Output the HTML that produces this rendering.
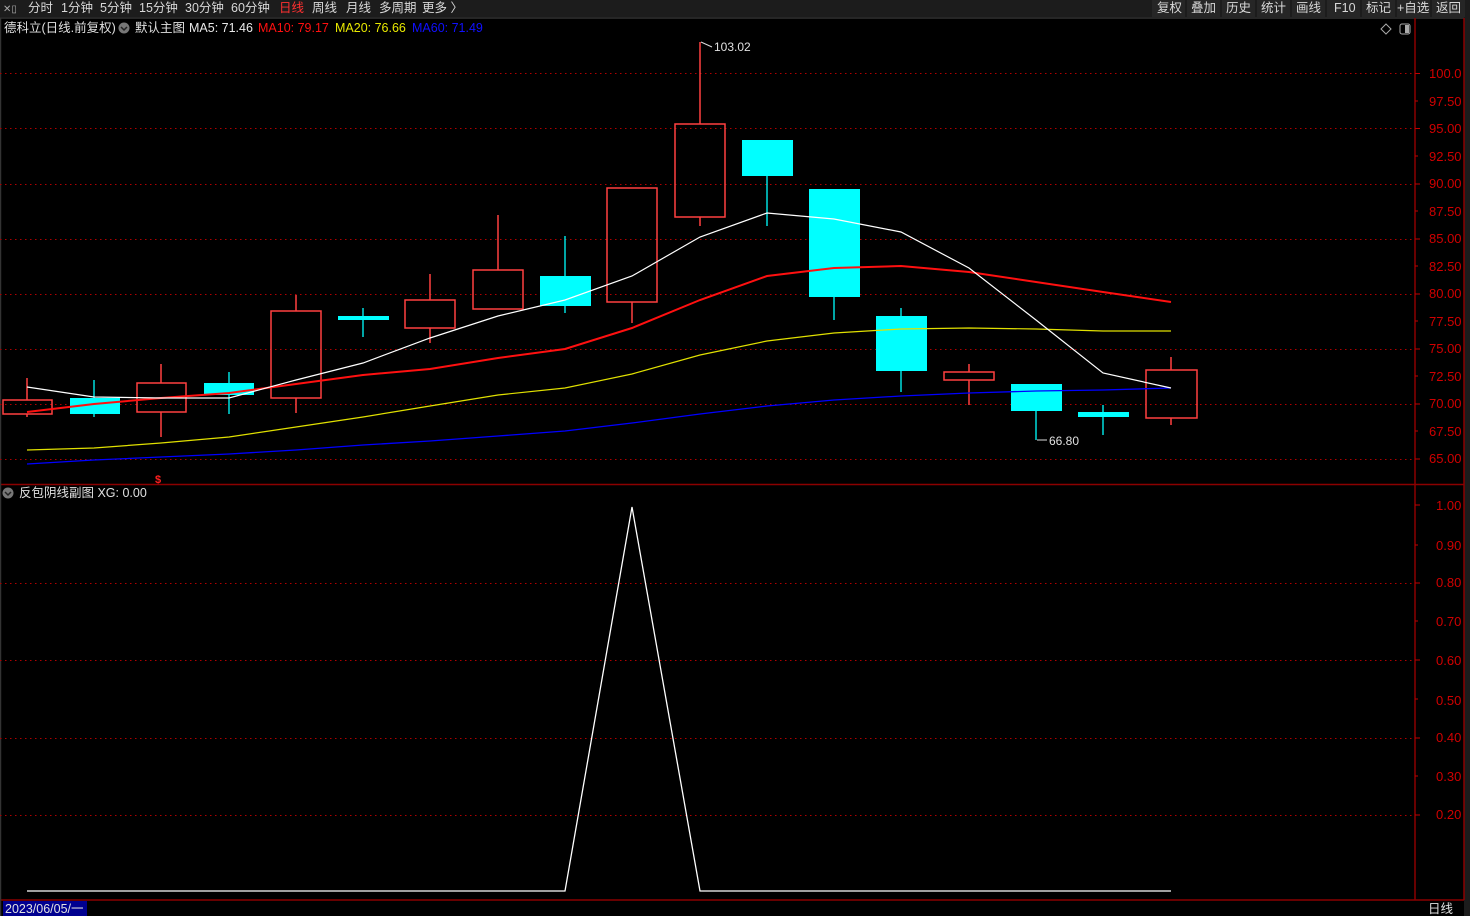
<!DOCTYPE html>
<html><head><meta charset="utf-8"><style>
body{margin:0;width:1470px;height:916px;background:#000;overflow:hidden;font-family:"Liberation Sans","Noto Sans CJK SC",sans-serif;}
svg{position:absolute;left:0;top:0}
text{font-family:"Liberation Sans","Noto Sans CJK SC",sans-serif;}
</style></head><body>
<svg width="1470" height="916" xmlns="http://www.w3.org/2000/svg">
<rect x="0" y="0" width="1470" height="17" fill="#1c1c1c"/>
<g font-size="12.5" fill="#d8d8d8">
<text x="3" y="12" fill="#aaa" font-size="10">✕▯</text>
<text x="28" y="12">分时</text><text x="61" y="12">1分钟</text><text x="100" y="12">5分钟</text><text x="139" y="12">15分钟</text><text x="185" y="12">30分钟</text><text x="231" y="12">60分钟</text>
<text x="279" y="12" fill="#ff3030">日线</text><text x="312" y="12">周线</text><text x="346" y="12">月线</text><text x="379" y="12">多周期</text><text x="422" y="12">更多 〉</text>
</g>
<g fill="#262626"><rect x="1152" y="0" width="33" height="17"/><rect x="1187" y="0" width="33" height="17"/><rect x="1222" y="0" width="33" height="17"/><rect x="1257" y="0" width="33" height="17"/><rect x="1292" y="0" width="33" height="17"/><rect x="1327" y="0" width="33" height="17"/><rect x="1362" y="0" width="33" height="17"/><rect x="1397" y="0" width="33" height="17"/><rect x="1432" y="0" width="33" height="17"/></g>
<g font-size="12.5" fill="#d8d8d8"><text x="1157" y="12">复权</text><text x="1191" y="12">叠加</text><text x="1226" y="12">历史</text><text x="1261" y="12">统计</text><text x="1296" y="12">画线</text><text x="1334" y="12">F10</text><text x="1366" y="12">标记</text><text x="1397" y="12">+自选</text><text x="1436" y="12">返回</text></g>
<rect x="1464" y="17" width="6" height="899" fill="#1c1c1c"/>
<g stroke="#8b0000" stroke-width="1.5" fill="none">
<line x1="0" y1="18" x2="1464" y2="18" stroke="#333"/>
<line x1="1415" y1="18" x2="1415" y2="900"/>
<line x1="1464" y1="18" x2="1464" y2="900"/>
<line x1="0" y1="484.5" x2="1464" y2="484.5"/>
<line x1="0" y1="900" x2="1464" y2="900"/>
<line x1="0.5" y1="18" x2="0.5" y2="916" stroke="#333"/>
</g>
<g stroke="#b00000" stroke-width="1" stroke-dasharray="1.5,3.5">
<line x1="0" y1="73.5" x2="1412" y2="73.5"/><line x1="0" y1="128.5" x2="1412" y2="128.5"/><line x1="0" y1="184.5" x2="1412" y2="184.5"/><line x1="0" y1="239.5" x2="1412" y2="239.5"/><line x1="0" y1="294.5" x2="1412" y2="294.5"/><line x1="0" y1="349.5" x2="1412" y2="349.5"/><line x1="0" y1="404.5" x2="1412" y2="404.5"/><line x1="0" y1="459.5" x2="1412" y2="459.5"/>
<line x1="0" y1="583.5" x2="1412" y2="583.5"/><line x1="0" y1="660.5" x2="1412" y2="660.5"/><line x1="0" y1="738.5" x2="1412" y2="738.5"/><line x1="0" y1="815.5" x2="1412" y2="815.5"/>
</g>
<g font-size="13" fill="#d00000">
<text x="1429" y="78">100.0</text><text x="1429" y="106">97.50</text><text x="1429" y="133">95.00</text><text x="1429" y="161">92.50</text><text x="1429" y="188">90.00</text><text x="1429" y="216">87.50</text><text x="1429" y="243">85.00</text><text x="1429" y="271">82.50</text><text x="1429" y="298">80.00</text><text x="1429" y="326">77.50</text><text x="1429" y="353">75.00</text><text x="1429" y="381">72.50</text><text x="1429" y="408">70.00</text><text x="1429" y="436">67.50</text><text x="1429" y="463">65.00</text>
<text x="1436" y="510">1.00</text><text x="1436" y="550">0.90</text><text x="1436" y="587">0.80</text><text x="1436" y="626">0.70</text><text x="1436" y="665">0.60</text><text x="1436" y="705">0.50</text><text x="1436" y="742">0.40</text><text x="1436" y="781">0.30</text><text x="1436" y="819">0.20</text>
</g>
<g stroke="#c00000"><path d="M1415 73.5h5M1415 101h3M1415 128.5h5M1415 156h3M1415 184h5M1415 211h3M1415 239h5M1415 266h3M1415 294h5M1415 321h3M1415 349h5M1415 376h3M1415 404h5M1415 431h3M1415 459h5M1415 505h5M1415 545h3M1415 583h5M1415 621h3M1415 660h5M1415 699h3M1415 738h5M1415 776h3M1415 815h5"/></g>
<g font-size="12.5">
<text x="4" y="32" fill="#e0e0e0">德科立(日线.前复权)</text>
<circle cx="124" cy="28" r="5.5" fill="#777"/><path d="M121 27l3 3 3-3" stroke="#222" stroke-width="1.5" fill="none"/>
<text x="135" y="32" fill="#e0e0e0">默认主图</text>
<text x="189" y="32" fill="#e8e8e8">MA5: 71.46</text>
<text x="258" y="32" fill="#ff1010">MA10: 79.17</text>
<text x="335" y="32" fill="#e8e800">MA20: 76.66</text>
<text x="412" y="32" fill="#1010ff">MA60: 71.49</text>
<circle cx="8" cy="493" r="5.5" fill="#777"/><path d="M5 492l3 3 3-3" stroke="#222" stroke-width="1.5" fill="none"/>
<text x="19" y="497" fill="#e0e0e0">反包阴线副图 XG: 0.00</text>
</g>
<path d="M1386 24l5 5-5 5-5-5z" stroke="#aaa" fill="none"/>
<rect x="1400" y="24" width="10" height="10" rx="2" stroke="#aaa" fill="none"/><rect x="1405" y="25" width="4" height="8" fill="#aaa"/>
<text x="155" y="483" font-size="11" fill="#ff2020" font-weight="bold">$</text>
<g stroke="#ff4040" stroke-width="1.5" fill="none">
<path d="M27 378v22M27 414v3"/><rect x="3" y="400" width="49" height="14"/>
<path d="M161 364v19M161 412v25"/><rect x="137" y="383" width="49" height="29"/>
<path d="M296 295v16M296 398v15"/><rect x="271" y="311" width="50" height="87"/>
<path d="M430 274v26M430 328v15"/><rect x="405" y="300" width="50" height="28"/>
<path d="M498 215v55"/><rect x="473" y="270" width="50" height="39"/>
<path d="M632 302v21"/><rect x="607" y="188" width="50" height="114"/>
<path d="M700 42v82M700 217v9"/><rect x="675" y="124" width="50" height="93"/>
<path d="M969 364v8M969 380v25"/><rect x="944" y="372" width="50" height="8"/>
<path d="M1171 357v13M1171 418v7"/><rect x="1146" y="370" width="51" height="48"/>
</g>
<g stroke="#00ffff" stroke-width="1.3">
<path d="M94 380v37M229 372v42M363 308v29M565 236v77M767 176v50M834 297v23M901 308v84M1036 410v30M1103 405v30"/>
</g>
<g fill="#00ffff">
<rect x="70" y="398" width="50" height="16"/><rect x="204" y="383" width="50" height="12"/><rect x="338" y="316" width="51" height="4"/><rect x="540" y="276" width="51" height="30"/><rect x="742" y="140" width="51" height="36"/><rect x="809" y="189" width="51" height="108"/><rect x="876" y="316" width="51" height="55"/><rect x="1011" y="384" width="51" height="27"/><rect x="1078" y="412" width="51" height="5"/>
</g>
<polyline fill="none" stroke="#0000ff" stroke-width="1.3" points="27,464 94,460 161,457 229,454 296,450 363,445 430,441 498,436 565,431 632,423 700,414 767,406 834,400 901,396 969,393 1036,391 1103,390 1171,388"/>
<polyline fill="none" stroke="#e0e000" stroke-width="1.2" points="27,450 94,448 161,443 229,437 296,427 363,417 430,406 498,395 565,388 632,374 700,355 767,341 834,333 901,329 969,328 1036,329 1103,331 1171,331"/>
<polyline fill="none" stroke="#ff1010" stroke-width="2" points="27,412 94,404 161,398 229,393 296,384 363,375 430,369 498,358 565,349 632,328 700,300 767,276 834,268 901,266 969,272 1036,282 1103,292 1171,302"/>
<polyline fill="none" stroke="#ffffff" stroke-width="1.2" points="27,387 94,397 161,398 229,398 296,380 363,363 430,338 498,316 565,300 632,276 700,237 767,213 834,219 901,232 969,268 1036,320 1103,373 1171,388"/>
<g font-size="12" fill="#e0e0e0"><text x="714" y="51">103.02</text><text x="1049" y="445">66.80</text></g>
<path d="M701 42l11 5M1037 440h10" stroke="#ddd"/>
<polyline fill="none" stroke="#ffffff" stroke-width="1.3" points="27,891 565,891 632,507 700,891 1171,891"/>
<rect x="3" y="901" width="84" height="15" fill="#000090"/>
<text x="5" y="913" font-size="12.5" fill="#e0e0e0">2023/06/05/一</text>
<text x="1428" y="913" font-size="12.5" fill="#e0e0e0">日线</text>
</svg>
</body></html>
